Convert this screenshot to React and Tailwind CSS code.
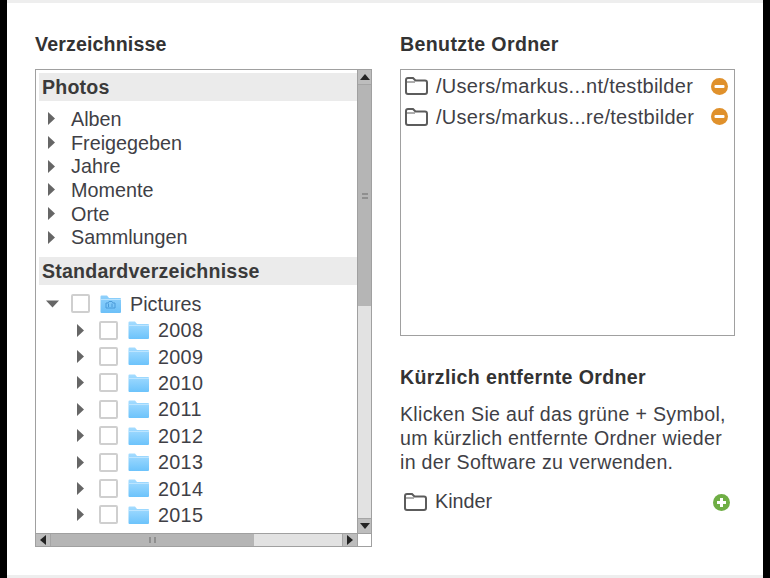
const font = { fontFamily: '"Liberation Sans", Arial, sans-serif' };

function ArrowRight() {
  return (
    <svg viewBox="0 0 7 13" className="w-[7px] h-[13px] shrink-0">
      <path d="M0 0 L7 6.5 L0 13 Z" fill="#666666" />
    </svg>
  );
}

function ArrowDown() {
  return (
    <svg viewBox="0 0 13 8" className="w-[13px] h-[8px] shrink-0">
      <path d="M0 0.5 L13 0.5 L6.5 7.5 Z" fill="#666666" />
    </svg>
  );
}

function BlueFolder({ pictures }) {
  return (
    <svg viewBox="0 0 21 18" className="w-[21px] h-[18px] shrink-0">
      <defs>
        <linearGradient id={pictures ? "fp" : "fy"} x1="0" y1="0" x2="0" y2="1">
          <stop offset="0" stopColor={pictures ? "#8fd0fb" : "#a5dcff"} />
          <stop offset="1" stopColor={pictures ? "#6cc0f8" : "#6cc3fb"} />
        </linearGradient>
      </defs>
      <path d="M0.5 1.5 Q0.5 0.5 1.5 0.5 L7 0.5 L9 3 L20 3 Q21 3 21 4 L21 17 Q21 18 20 18 L1.5 18 Q0.5 18 0.5 17 Z" fill={`url(#${pictures ? "fp" : "fy"})`} />
      <path d="M0.5 4.5 L21 4.5" stroke="#c6e9ff" strokeWidth="0.8" />
      {pictures && (
        <path d="M6 8 L8 8 L9 6.5 L12 6.5 L13 8 L15 8 L15 13 L6 13 Z M8.5 8.5 L8.5 12 M12 8.5 L12 12" fill="none" stroke="#4a9ad9" strokeWidth="1" />
      )}
    </svg>
  );
}

function OutlineFolder() {
  return (
    <svg viewBox="0 0 23 18" className="w-[23px] h-[18px] shrink-0">
      <path d="M1 3 Q1 1 3 1 L8 1 L10.5 3.5 L20 3.5 Q22 3.5 22 5.5 L22 15 Q22 17 20 17 L3 17 Q1 17 1 15 Z" fill="none" stroke="#5c5c5c" strokeWidth="2" />
      <path d="M1.5 5 L10 5" stroke="#5c5c5c" strokeWidth="1" />
    </svg>
  );
}

function Checkbox() {
  return <div className="w-[19px] h-[19px] shrink-0 bg-white border-2 border-[#cfcfcf] rounded-[2px]" />;
}

function Section({ children }) {
  return (
    <div className="h-[28px] flex items-center pl-[3px] pt-[2px] bg-[#ebebeb] text-[19.6px] tracking-[0.2px] font-bold text-[#3a3a3a]">
      {children}
    </div>
  );
}

function PathRow({ children }) {
  return (
    <div className="h-[30.5px] flex items-center pl-[4px] pr-[6px]">
      <OutlineFolder />
      <span className="ml-[8px] flex-1 text-[20px] tracking-[0.28px] text-[#3f3f46] whitespace-nowrap">{children}</span>
      <svg viewBox="0 0 17 17" className="w-[17px] h-[17px] shrink-0">
        <circle cx="8.5" cy="8.5" r="8.5" fill="#e0912c" />
        <rect x="3.5" y="7" width="10" height="3" rx="1" fill="#ffffff" />
      </svg>
    </div>
  );
}

const albums = ["Alben", "Freigegeben", "Jahre", "Momente", "Orte", "Sammlungen"];
const years = ["2008", "2009", "2010", "2011", "2012", "2013", "2014", "2015"];

export default function App() {
  return (
    <div style={font} className="w-[770px] h-[578px] flex bg-black overflow-hidden">
      <div className="w-[7px] shrink-0" />
      <div className="w-[755.5px] flex flex-col bg-white">
        <div className="h-[3px] shrink-0 bg-[#eeeeee]" />
        <div className="flex-1 flex pl-[28px] pt-[29px]">
          {/* left column */}
          <div className="w-[337px]">
            <h2 className="h-[24px] leading-[24px] text-[19.6px] tracking-[0.15px] font-bold text-[#333333]">Verzeichnisse</h2>
            <div className="mt-[13px] h-[478px] border border-[#a0a0a0] flex flex-col">
              <div className="h-[463px] flex">
                <div className="flex-1 pl-[3px] pt-[3px] overflow-hidden text-[19.8px] text-[#3f3f46]">
                  <Section>Photos</Section>
                  <div className="pt-[6px] pb-[7.6px]">
                    {albums.map((name) => (
                      <div key={name} className="h-[23.7px] flex items-center pl-[9px]">
                        <ArrowRight />
                        <span className="ml-[16px] pt-[2px]">{name}</span>
                      </div>
                    ))}
                  </div>
                  <Section>Standardverzeichnisse</Section>
                  <div className="pt-[5.8px]">
                    <div className="h-[26.4px] flex items-center pl-[7px]">
                      <ArrowDown />
                      <div className="ml-[12px]"><Checkbox /></div>
                      <div className="ml-[10px]"><BlueFolder pictures /></div>
                      <span className="ml-[9px] pt-[2px]">Pictures</span>
                    </div>
                    {years.map((year) => (
                      <div key={year} className="h-[26.4px] flex items-center pl-[37px]">
                        <div className="ml-[1px]"><ArrowRight /></div>
                        <div className="ml-[15px]"><Checkbox /></div>
                        <div className="ml-[10px]"><BlueFolder /></div>
                        <span className="ml-[9px] pt-[2px] tracking-[0.3px]">{year}</span>
                      </div>
                    ))}
                  </div>
                </div>
                {/* vertical scrollbar */}
                <div className="w-[14px] shrink-0 flex flex-col border-l border-[#a0a0a0] bg-[#e2e2e2]">
                  <div className="h-[15px] flex items-center justify-center bg-[#bdbdbd] border-b border-[#a5a5a5]">
                    <svg viewBox="0 0 10 6" className="w-[10px] h-[6px]"><path d="M5 0 L10 6 L0 6 Z" fill="#222222" /></svg>
                  </div>
                  <div className="h-[221px] flex items-center justify-center bg-[#b5b5b5]">
                    <div className="w-[6px] h-[6px] border-y-2 border-[#8f8f8f]" />
                  </div>
                  <div className="flex-1" />
                  <div className="h-[15px] flex items-center justify-center bg-[#bdbdbd] border-t border-[#a5a5a5]">
                    <svg viewBox="0 0 10 6" className="w-[10px] h-[6px]"><path d="M0 0 L10 0 L5 6 Z" fill="#222222" /></svg>
                  </div>
                </div>
              </div>
              {/* horizontal scrollbar */}
              <div className="flex-1 flex border-t border-[#a0a0a0] bg-[#e2e2e2]">
                <div className="w-[15px] flex items-center justify-center bg-[#bdbdbd] border-r border-[#a5a5a5]">
                  <svg viewBox="0 0 6 10" className="w-[6px] h-[10px]"><path d="M0 5 L6 0 L6 10 Z" fill="#222222" /></svg>
                </div>
                <div className="w-[203px] flex items-center justify-center bg-[#b5b5b5]">
                  <div className="w-[7px] h-[6px] border-x-2 border-[#8f8f8f]" />
                </div>
                <div className="flex-1" />
                <div className="w-[15px] flex items-center justify-center bg-[#bdbdbd] border-l border-[#a5a5a5]">
                  <svg viewBox="0 0 6 10" className="w-[6px] h-[10px]"><path d="M6 5 L0 0 L0 10 Z" fill="#222222" /></svg>
                </div>
                <div className="w-[14px] bg-white border-l border-[#a0a0a0]" />
              </div>
            </div>
          </div>

          {/* right column */}
          <div className="w-[335px] ml-[28px]">
            <h2 className="h-[24px] leading-[24px] text-[19.6px] tracking-[0.35px] font-bold text-[#333333]">Benutzte Ordner</h2>
            <div className="mt-[13px] h-[267px] border border-[#a0a0a0] pt-[1px]">
              <PathRow>/Users/markus...nt/testbilder</PathRow>
              <PathRow>/Users/markus...re/testbilder</PathRow>
            </div>
            <h2 className="mt-[29px] h-[24px] leading-[24px] text-[19.6px] tracking-[0.35px] font-bold text-[#333333] whitespace-nowrap">Kürzlich entfernte Ordner</h2>
            <p className="mt-[13px] text-[19.6px] tracking-[0.3px] leading-[24px] text-[#3f3f46] whitespace-nowrap">
              Klicken Sie auf das grüne + Symbol,<br />
              um kürzlich entfernte Ordner wieder<br />
              in der Software zu verwenden.
            </p>
            <div className="mt-[16px] h-[24px] flex items-center pl-[4px] pr-[5px]">
              <OutlineFolder />
              <span className="ml-[8px] flex-1 text-[19.8px] text-[#3f3f46]">Kinder</span>
              <svg viewBox="0 0 17 17" className="w-[17px] h-[17px] shrink-0">
                <circle cx="8.5" cy="8.5" r="8.5" fill="#6fae45" />
                <path d="M8.5 4 L8.5 13 M4 8.5 L13 8.5" stroke="#ffffff" strokeWidth="3" />
              </svg>
            </div>
          </div>
        </div>
        <div className="h-[3px] shrink-0 bg-[#eeeeee]" />
      </div>
    </div>
  );
}
